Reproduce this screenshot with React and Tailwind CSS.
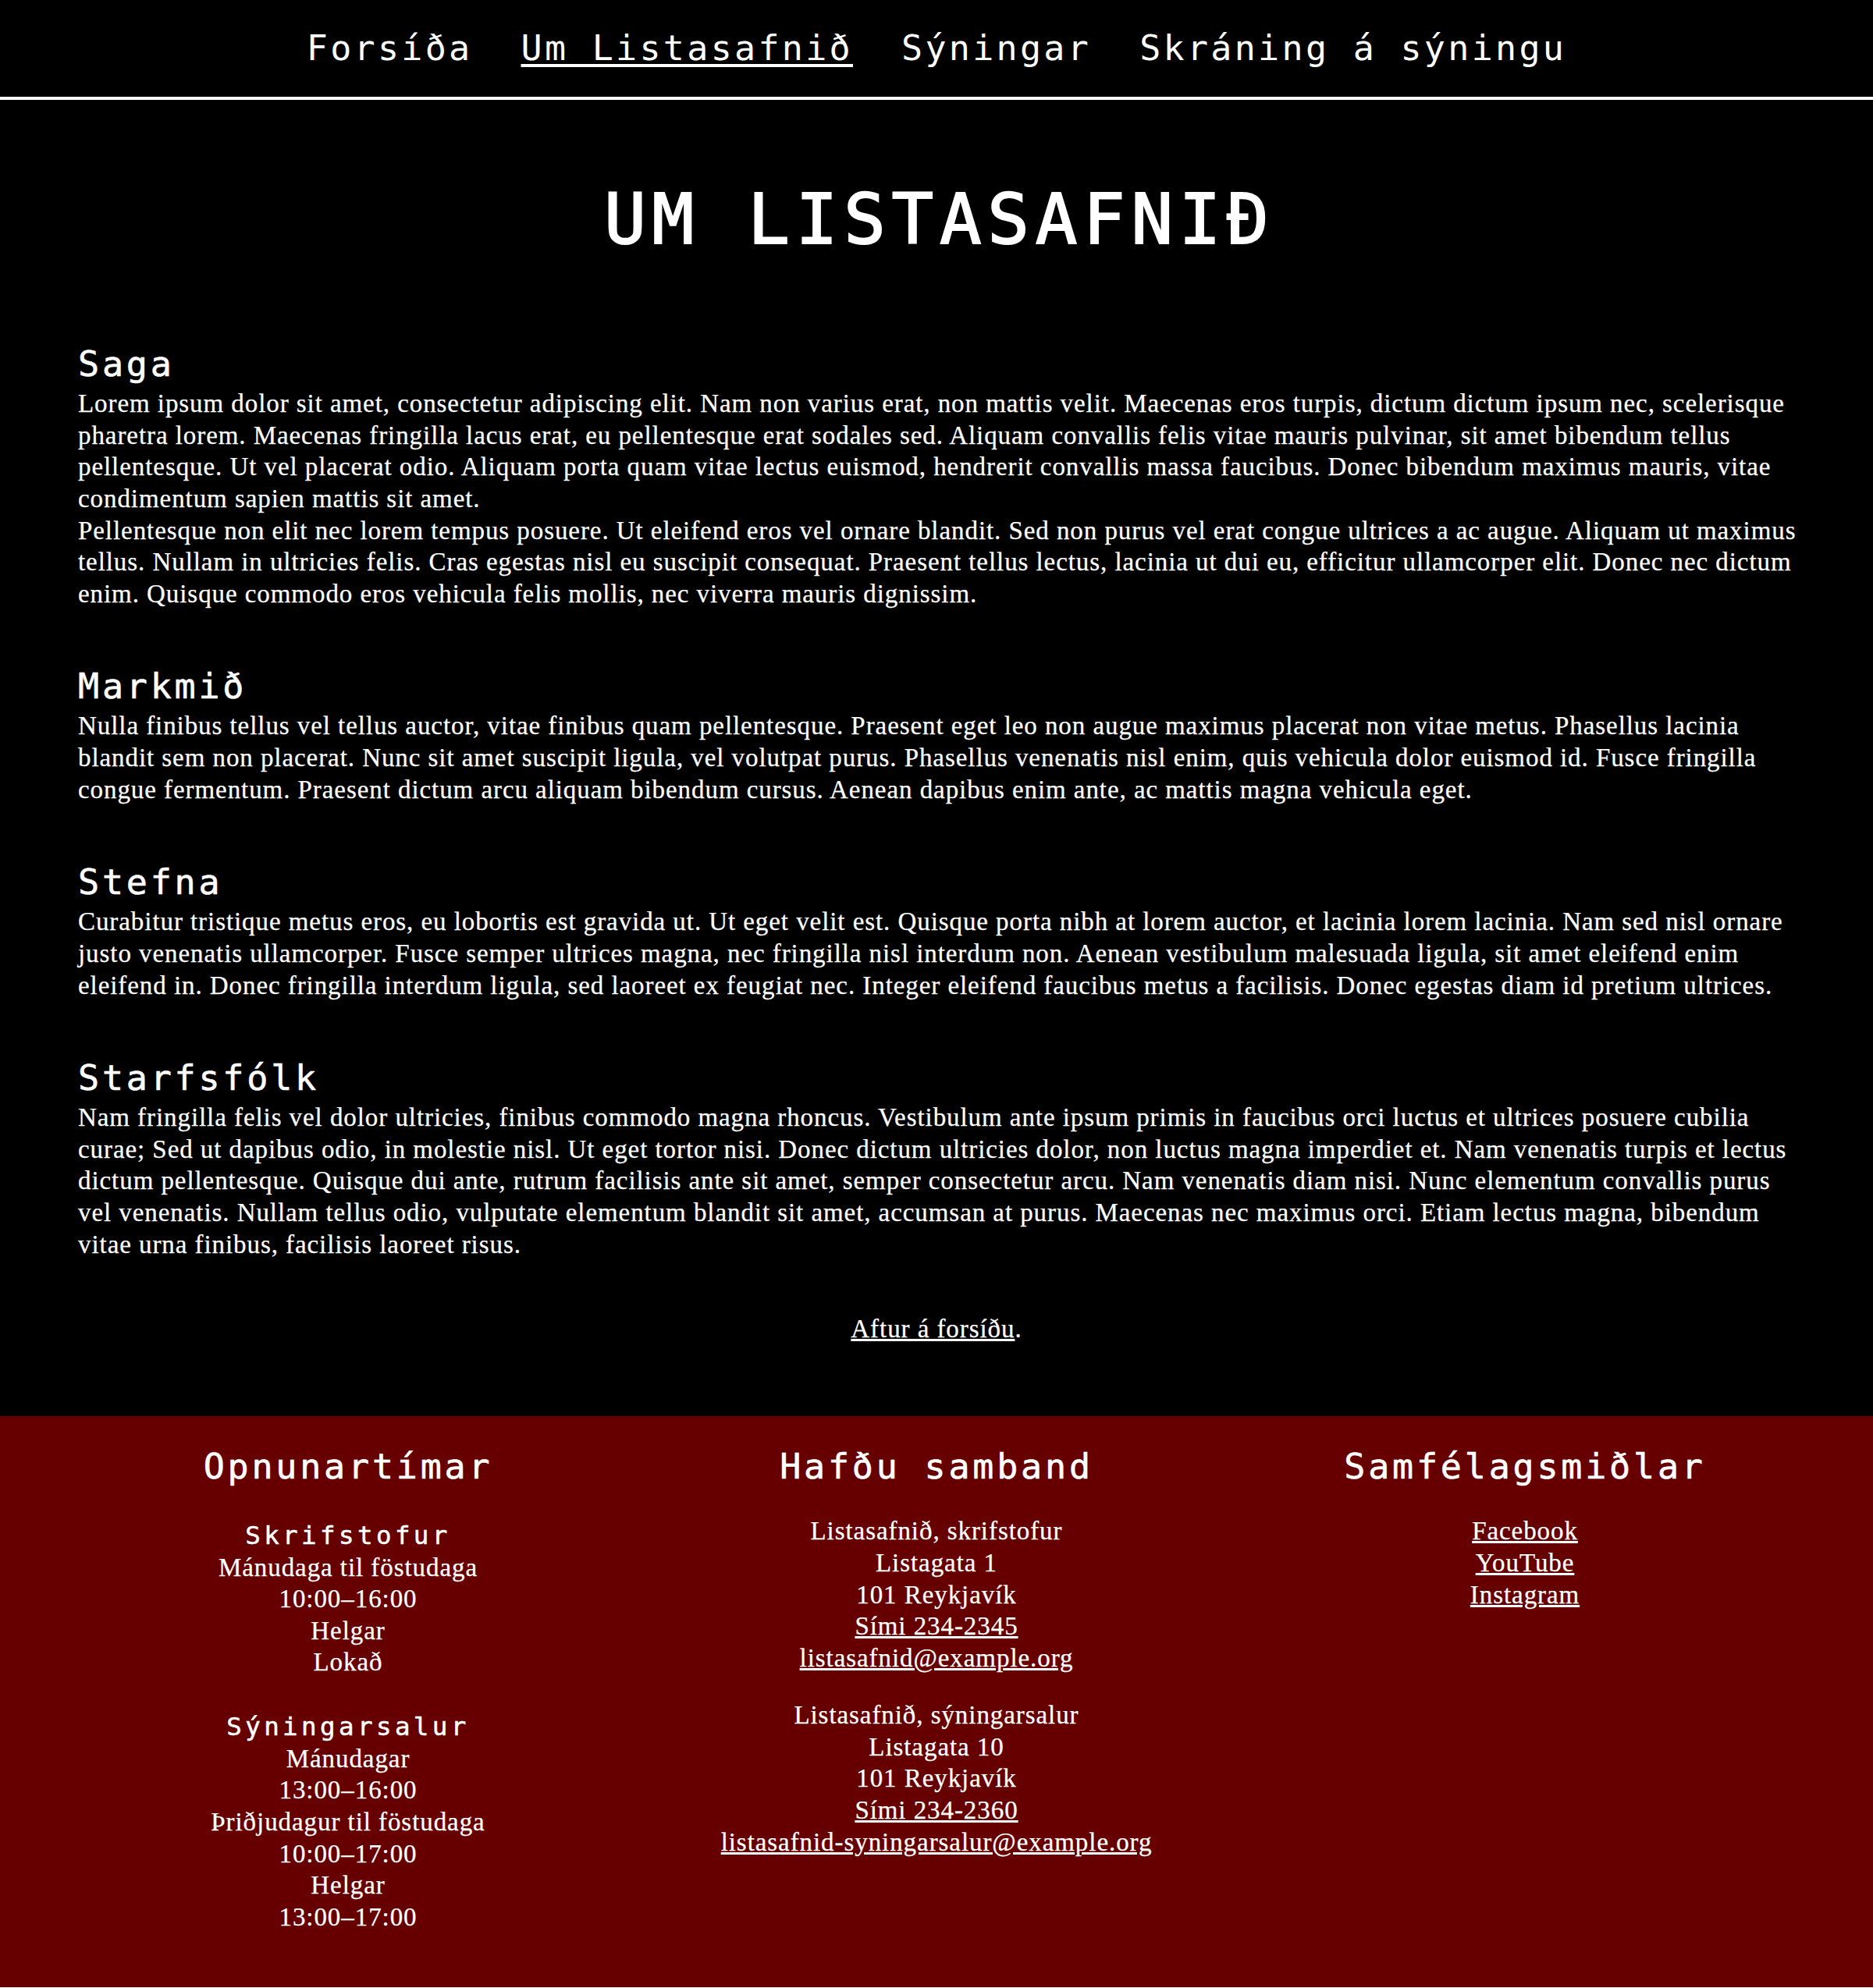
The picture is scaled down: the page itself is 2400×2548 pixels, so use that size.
import React from "react";

const mono = "font-['DejaVu_Sans_Mono',monospace]";
const serif = "font-['Liberation_Serif',serif]";
const bodyText = `${serif} text-[33px] leading-[40.625px] tracking-[0.93px] [-webkit-text-stroke:0.25px_white]`;

const sections = [
  {
    title: "Saga",
    paras: [
      [
        "Lorem ipsum dolor sit amet, consectetur adipiscing elit. Nam non varius erat, non mattis velit. Maecenas eros turpis, dictum dictum ipsum nec, scelerisque",
        "pharetra lorem. Maecenas fringilla lacus erat, eu pellentesque erat sodales sed. Aliquam convallis felis vitae mauris pulvinar, sit amet bibendum tellus",
        "pellentesque. Ut vel placerat odio. Aliquam porta quam vitae lectus euismod, hendrerit convallis massa faucibus. Donec bibendum maximus mauris, vitae",
        "condimentum sapien mattis sit amet.",
      ],
      [
        "Pellentesque non elit nec lorem tempus posuere. Ut eleifend eros vel ornare blandit. Sed non purus vel erat congue ultrices a ac augue. Aliquam ut maximus",
        "tellus. Nullam in ultricies felis. Cras egestas nisl eu suscipit consequat. Praesent tellus lectus, lacinia ut dui eu, efficitur ullamcorper elit. Donec nec dictum",
        "enim. Quisque commodo eros vehicula felis mollis, nec viverra mauris dignissim.",
      ],
    ],
  },
  {
    title: "Markmið",
    paras: [
      [
        "Nulla finibus tellus vel tellus auctor, vitae finibus quam pellentesque. Praesent eget leo non augue maximus placerat non vitae metus. Phasellus lacinia",
        "blandit sem non placerat. Nunc sit amet suscipit ligula, vel volutpat purus. Phasellus venenatis nisl enim, quis vehicula dolor euismod id. Fusce fringilla",
        "congue fermentum. Praesent dictum arcu aliquam bibendum cursus. Aenean dapibus enim ante, ac mattis magna vehicula eget.",
      ],
    ],
  },
  {
    title: "Stefna",
    paras: [
      [
        "Curabitur tristique metus eros, eu lobortis est gravida ut. Ut eget velit est. Quisque porta nibh at lorem auctor, et lacinia lorem lacinia. Nam sed nisl ornare",
        "justo venenatis ullamcorper. Fusce semper ultrices magna, nec fringilla nisl interdum non. Aenean vestibulum malesuada ligula, sit amet eleifend enim",
        "eleifend in. Donec fringilla interdum ligula, sed laoreet ex feugiat nec. Integer eleifend faucibus metus a facilisis. Donec egestas diam id pretium ultrices.",
      ],
    ],
  },
  {
    title: "Starfsfólk",
    paras: [
      [
        "Nam fringilla felis vel dolor ultricies, finibus commodo magna rhoncus. Vestibulum ante ipsum primis in faucibus orci luctus et ultrices posuere cubilia",
        "curae; Sed ut dapibus odio, in molestie nisl. Ut eget tortor nisi. Donec dictum ultricies dolor, non luctus magna imperdiet et. Nam venenatis turpis et lectus",
        "dictum pellentesque. Quisque dui ante, rutrum facilisis ante sit amet, semper consectetur arcu. Nam venenatis diam nisi. Nunc elementum convallis purus",
        "vel venenatis. Nullam tellus odio, vulputate elementum blandit sit amet, accumsan at purus. Maecenas nec maximus orci. Etiam lectus magna, bibendum",
        "vitae urna finibus, facilisis laoreet risus.",
      ],
    ],
  },
];

function H2({ children, className = "" }) {
  return (
    <h2
      className={`${mono} text-[45px] leading-[61px] tracking-[3.8px] font-normal text-white [-webkit-text-stroke:0.6px_white] ${className}`}
    >
      {children}
    </h2>
  );
}

function H3({ children, className = "" }) {
  return (
    <h3
      className={`${mono} text-[32.5px] leading-[40.625px] tracking-[4.4px] font-normal text-white [-webkit-text-stroke:0.5px_white] ${className}`}
    >
      {children}
    </h3>
  );
}

function Line({ children }) {
  return <span className="block whitespace-nowrap">{children}</span>;
}

export default function App() {
  const navItems = [
    { label: "Forsíða", active: false },
    { label: "Um Listasafnið", active: true },
    { label: "Sýningar", active: false },
    { label: "Skráning á sýningu", active: false },
  ];

  return (
    <div className="bg-black text-white">
      <header className="border-b-4 border-white">
        <nav
          className={`${mono} flex justify-center gap-[62px] pt-[32px] pb-[32px] text-[45px] leading-[60px] tracking-[3.3px]`}
        >
          {navItems.map((item) => (
            <a
              key={item.label}
              href="#"
              className={`text-white ${item.active ? "underline underline-offset-[5px]" : "no-underline"}`}
            >
              {item.label}
            </a>
          ))}
        </nav>
      </header>

      <main className="px-[100px] pt-[100px] pb-[91px]">
        <h1
          className={`${mono} text-center text-[89px] leading-[107px] tracking-[7.8px] pl-[7.8px] font-normal [-webkit-text-stroke:2px_white]`}
        >
          UM LISTASAFNIÐ
        </h1>

        <div className="mt-[101px] flex flex-col gap-[68px]">
          {sections.map((s) => (
            <section key={s.title}>
              <H2>{s.title}</H2>
              <div className={bodyText}>
                {s.paras.map((p, i) => (
                  <p key={i}>
                    {p.map((l, j) => (
                      <Line key={j}>{l}</Line>
                    ))}
                  </p>
                ))}
              </div>
            </section>
          ))}

          <p className={`${bodyText} text-center`}>
            <a href="#" className="text-white underline">
              Aftur á forsíðu
            </a>
            .
          </p>
        </div>
      </main>

      <footer className="bg-[#660000] px-[100px] pt-[34px] pb-[70px] text-white">
        <div className="grid grid-cols-3 gap-[62px] items-start text-center">
          <div>
            <H2>Opnunartímar</H2>
            <div className={bodyText}>
              <div className="mt-[38px]">
                <H3>Skrifstofur</H3>
                <p>Mánudaga til föstudaga</p>
                <p>10:00–16:00</p>
                <p>Helgar</p>
                <p>Lokað</p>
              </div>
              <div className="mt-[42px]">
                <H3>Sýningarsalur</H3>
                <p>Mánudagar</p>
                <p>13:00–16:00</p>
                <p>Þriðjudagur til föstudaga</p>
                <p>10:00–17:00</p>
                <p>Helgar</p>
                <p>13:00–17:00</p>
              </div>
            </div>
          </div>

          <div>
            <H2>Hafðu samband</H2>
            <div className={bodyText}>
              <p className="mt-[32.5px]">
                <span className="block">Listasafnið, skrifstofur</span>
                <span className="block">Listagata 1</span>
                <span className="block">101 Reykjavík</span>
                <a href="#" className="block text-white underline">
                  Sími 234-2345
                </a>
                <a href="#" className="block text-white underline">
                  listasafnid@example.org
                </a>
              </p>
              <p className="mt-[32.5px]">
                <span className="block">Listasafnið, sýningarsalur</span>
                <span className="block">Listagata 10</span>
                <span className="block">101 Reykjavík</span>
                <a href="#" className="block text-white underline">
                  Sími 234-2360
                </a>
                <a href="#" className="block text-white underline">
                  listasafnid-syningarsalur@example.org
                </a>
              </p>
            </div>
          </div>

          <div>
            <H2>Samfélagsmiðlar</H2>
            <ul className={`${bodyText} mt-[32.5px]`}>
              <li>
                <a href="#" className="text-white underline">
                  Facebook
                </a>
              </li>
              <li>
                <a href="#" className="text-white underline">
                  YouTube
                </a>
              </li>
              <li>
                <a href="#" className="text-white underline">
                  Instagram
                </a>
              </li>
            </ul>
          </div>
        </div>
      </footer>
    </div>
  );
}
